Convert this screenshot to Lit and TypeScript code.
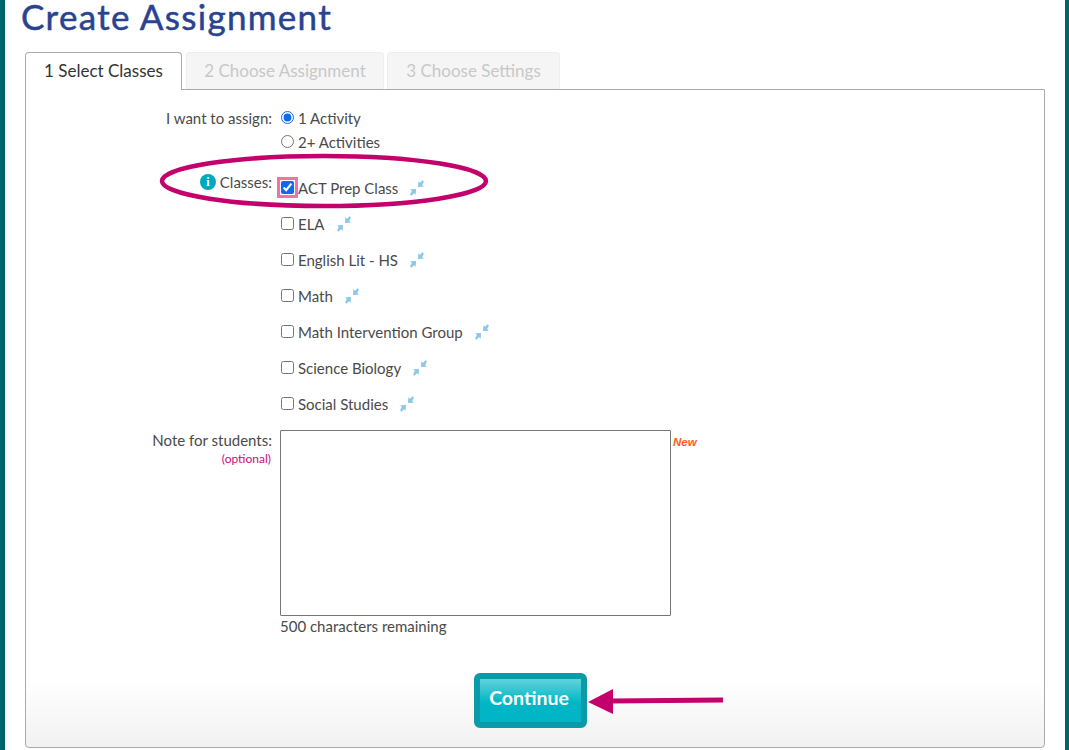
import { LitElement, html, css, svg } from "lit";
import { customElement } from "lit/decorators.js";

const classes: { name: string; checked?: boolean }[] = [
  { name: "ACT Prep Class", checked: true },
  { name: "ELA" },
  { name: "English Lit - HS" },
  { name: "Math" },
  { name: "Math Intervention Group" },
  { name: "Science Biology" },
  { name: "Social Studies" },
];

const shrink = svg`<svg class="shrink" width="16" height="16" viewBox="0 0 16 16" aria-hidden="true">
  <path fill="#8cc8e8" d="M15 1.500 13.500.2 11 2.700 9.300 1.200 9 7l5.800-.3-1.600-1.700zM1 14.500l1.500 1.300L5 13.300l1.700 1.500L7 9l-5.800.3 1.600 1.700z"/>
</svg>`;

@customElement("app-root")
export class AppRoot extends LitElement {
  static styles = css`
    :host {
      display: block;
      height: 750px;
      overflow: hidden;
      background: #fff;
      font-family: "Lato", sans-serif;
      font-size: 15px;
      color: #4a4a4a;
    }
    .page {
      box-sizing: border-box;
      height: 750px;
      border-left: 5px solid #00666c;
      border-right: 4px solid #00666c;
      padding: 0 20px;
      display: flex;
      flex-direction: column;
    }
    h1 {
      margin: 0 0 0 -4px;
      height: 52px;
      font-family: "Lato", sans-serif;
      font-weight: 400;
      font-size: 35px;
      line-height: 32px;
      letter-spacing: 1.3px;
      -webkit-text-stroke: 0.5px #2a4390;
      color: #2a4390;
    }
    .tabs {
      display: flex;
      gap: 3px;
      height: 38px;
      position: relative;
      z-index: 1;
    }
    .tab {
      box-sizing: border-box;
      height: 37px;
      border: 1px solid #eee;
      border-bottom: none;
      border-radius: 4px 4px 0 0;
      background: #f5f5f5;
      color: #c8c8c8;
      font-size: 17px;
      line-height: 35px;
      text-align: center;
      white-space: nowrap;
    }
    .tab.active {
      height: 38px;
      width: 157px;
      margin-right: 1px;
      border: 1px solid #aaa;
      border-bottom: none;
      background: #fff;
      color: #333;
    }
    .tab.two { width: 198px; }
    .tab.three { width: 173px; }
    .panel {
      position: relative;
      box-sizing: border-box;
      width: 1020px;
      height: 659px;
      margin-top: -1px;
      border: 1px solid #aaa;
      border-radius: 0 0 4px 4px;
      background: linear-gradient(#fff 0, #fff 590px, #f1f1f1 100%);
      padding-top: 16px;
    }
    .row {
      display: grid;
      grid-template-columns: 246px 1fr;
      column-gap: 8px;
    }
    .label {
      text-align: right;
      line-height: 24px;
      white-space: nowrap;
    }
    .assign { height: 55px; }
    .opt {
      display: flex;
      align-items: center;
      height: 24px;
      line-height: 24px;
      white-space: nowrap;
    }
    .opt input { margin-top: -2px; }
    input {
      margin: 0 4px 0 1px;
      width: 13px;
      height: 13px;
      flex: none;
      accent-color: #0b6cf0;
    }
    .classes .label {
      display: flex;
      justify-content: flex-end;
      align-items: center;
      gap: 4px;
      height: 24px;
      margin-top: 9px;
    }
    .info {
      width: 16px;
      height: 16px;
      border-radius: 50%;
      background: #00a9bd;
      color: #fff;
      font: bold 12px/16px "Liberation Serif", serif;
      text-align: center;
    }
    .list { padding-top: 15px; }
    .class {
      height: 36px;
      display: flex;
      align-items: flex-start;
      line-height: 24px;
      white-space: nowrap;
    }
    .class input { margin-top: 5px; }
    .class input.focus {
      outline: 3px solid #f56fae;
      outline-offset: 1px;
      border-radius: 3px;
    }
    .shrink { margin: 4px 0 0 11px; flex: none; }
    .note { margin-top: 2px; }
    .note .label { margin-top: -2px; }
    .note .optional {
      display: block;
      font-size: 12px;
      line-height: 14px;
      color: #cc0a78;
      margin-right: 1px;
    }
    .field { display: flex; flex-direction: column; }
    .boxrow { display: flex; align-items: flex-start; }
    textarea {
      display: block;
      box-sizing: border-box;
      width: 391px;
      height: 186px;
      margin: 0;
      border: 1px solid #767676;
      border-radius: 1px;
      resize: none;
      background: #fff;
    }
    .new {
      margin: 5px 0 0 2px;
      font: italic bold 11.500px/14px "Liberation Sans", sans-serif;
      color: #ff5a1f;
    }
    .remaining { line-height: 20px; }
    .actions {
      display: flex;
      justify-content: center;
      margin-top: 37px;
      padding-right: 9px;
    }
    button {
      box-sizing: border-box;
      width: 113px;
      height: 55px;
      padding: 0 3px 5px 0;
      border: 6px solid #0a9aa8;
      border-radius: 6px;
      background: linear-gradient(#63d2dc 0, #00b6c6 55%, #00b6c6 100%);
      color: #fff;
      font-family: "Lato", sans-serif;
      font-weight: 700;
      font-size: 19.500px;
      line-height: 36px;
    }
    .overlay {
      position: absolute;
      left: 0;
      top: 0;
      width: 100%;
      height: 100%;
      pointer-events: none;
    }
  `;

  render() {
    return html`
      <div class="page">
        <h1>Create Assignment</h1>
        <div class="tabs">
          <div class="tab active">1 Select Classes</div>
          <div class="tab two">2 Choose Assignment</div>
          <div class="tab three">3 Choose Settings</div>
        </div>
        <div class="panel">
          <div class="row assign">
            <div class="label">I want to assign:</div>
            <div>
              <label class="opt"><input type="radio" name="n" checked />1 Activity</label>
              <label class="opt"><input type="radio" name="n" />2+ Activities</label>
            </div>
          </div>
          <div class="row classes">
            <div class="label"><span class="info">i</span>Classes:</div>
            <div class="list">
              ${classes.map(
                (c) => html`<label class="class">
                  <input type="checkbox" class=${c.checked ? "focus" : ""} ?checked=${c.checked} />${c.name}${shrink}
                </label>`
              )}
            </div>
          </div>
          <div class="row note">
            <div class="label">Note for students:<span class="optional">(optional)</span></div>
            <div class="field">
              <div class="boxrow"><textarea></textarea><span class="new">New</span></div>
              <div class="remaining">500 characters remaining</div>
            </div>
          </div>
          <div class="actions"><button>Continue</button></div>
          <svg class="overlay" viewBox="0 0 1018 657" fill="none">
            <ellipse cx="298" cy="91" rx="162" ry="25" stroke="#c4006c" stroke-width="4.500" />
            <path d="M585 611 L697 610" stroke="#c4006c" stroke-width="5" />
            <path d="M562 612 L587 599 L587 624 Z" fill="#c4006c" />
          </svg>
        </div>
      </div>
    `;
  }
}
